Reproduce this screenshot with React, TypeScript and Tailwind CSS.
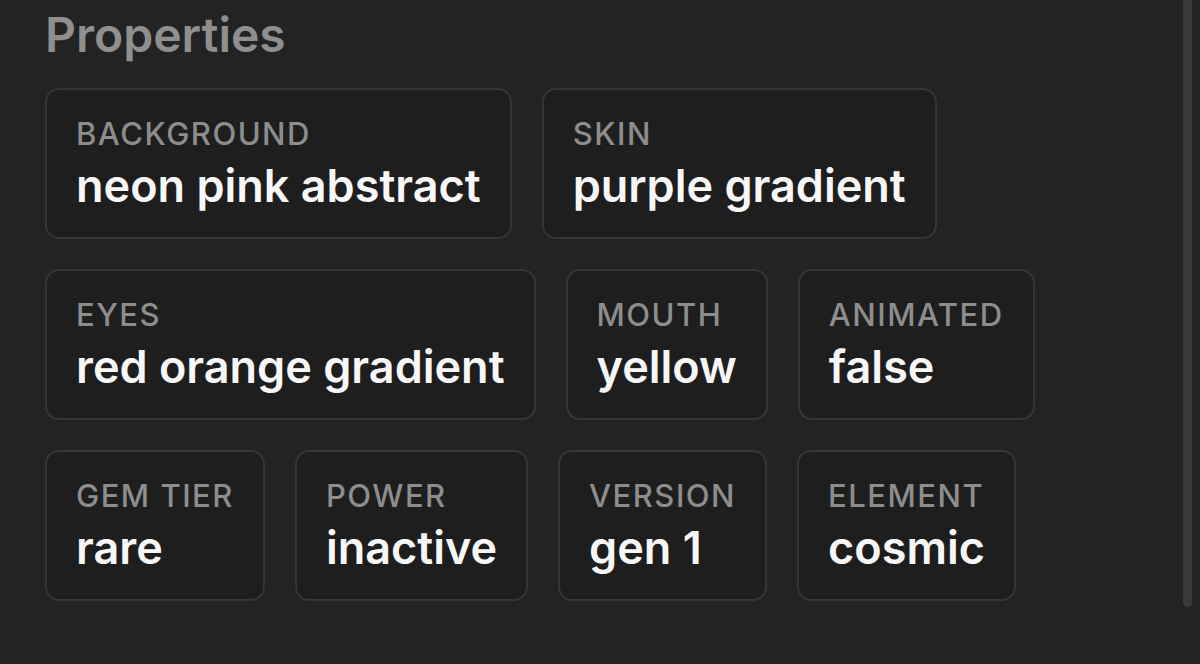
const rows: { label: string; value: string }[][] = [
  [
    { label: "BACKGROUND", value: "neon pink abstract" },
    { label: "SKIN", value: "purple gradient" },
  ],
  [
    { label: "EYES", value: "red orange gradient" },
    { label: "MOUTH", value: "yellow" },
    { label: "ANIMATED", value: "false" },
  ],
  [
    { label: "GEM TIER", value: "rare" },
    { label: "POWER", value: "inactive" },
    { label: "VERSION", value: "gen 1" },
    { label: "ELEMENT", value: "cosmic" },
  ],
];

function PropertyCard({ label, value }: { label: string; value: string }) {
  return (
    <div className="flex flex-col gap-[7px] rounded-[14px] border-2 border-[#363636] bg-[#1e1e1e] px-[29px] pt-[25px] pb-[25px]">
      <span className="text-[31px] leading-[38px] font-medium tracking-[1.5px] text-[#8d8d8d] whitespace-nowrap">{label}</span>
      <span className="text-[45px] leading-[52px] font-semibold text-[#f7f7f7] whitespace-nowrap">{value}</span>
    </div>
  );
}

export default function App() {
  return (
    <div className="relative h-[664px] w-[1200px] overflow-hidden bg-[#232323] font-['Inter',sans-serif]">
      <div className="flex flex-col px-[45px]">
        <h2 className="mt-[5px] text-[48px] leading-[60px] font-semibold text-[#8f8f8f]">Properties</h2>
        <div className="mt-[23px] flex flex-col gap-[30px]">
          {rows.map((row, i) => (
            <div key={i} className="flex flex-row gap-[30px]">
              {row.map((p) => (
                <PropertyCard key={p.label} label={p.label} value={p.value} />
              ))}
            </div>
          ))}
        </div>
      </div>
      {/* scrollbar */}
      <div className="absolute right-[8px] top-0 h-[607px] w-[9px] rounded-b-[5px] bg-[#3b3b3b]" />
    </div>
  );
}
